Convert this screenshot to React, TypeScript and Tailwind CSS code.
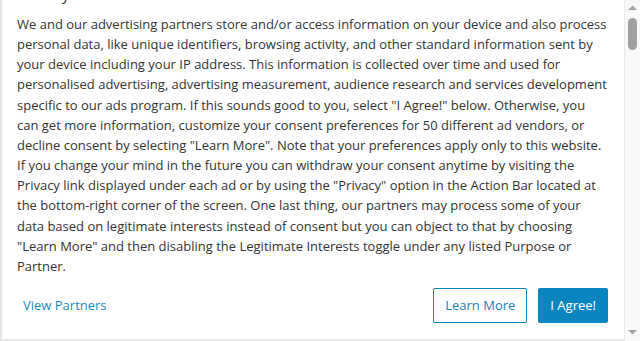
export default function App() {
  return (
    <div
      className="flex h-[341px] w-[640px] overflow-hidden bg-white text-[#333]"
      style={{ fontFamily: '"Open Sans", "Noto Sans", sans-serif' }}
    >
      {/* dialog body, scrolled a little past the heading */}
      <div className="flex-1 overflow-hidden border-b-2 border-l-2 border-r border-[#e6e6e6] border-r-[#e9e9e9]">
        <div className="-mt-[18px] px-[15px]">
          <h2 className="mb-2 text-[16px] leading-[24px] font-normal">Privacy</h2>
          <p className="text-[13px] leading-[20.15px]">
            We and our advertising partners store and/or access information on your device and also process
            personal data, like unique identifiers, browsing activity, and other standard information sent by
            your device including your IP address. This information is collected over time and used for
            personalised advertising, advertising measurement, audience research and services development
            specific to our ads program. If this sounds good to you, select "I Agree!" below. Otherwise, you
            can get more information, customize your consent preferences for 50 different ad vendors, or
            decline consent by selecting "Learn More". Note that your preferences apply only to this website.
            If you change your mind in the future you can withdraw your consent anytime by visiting the
            Privacy link displayed under each ad or by using the "Privacy" option in the Action Bar located at
            the bottom-right corner of the screen. One last thing, our partners may process some of your
            data based on legitimate interests instead of consent but you can object to that by choosing
            "Learn More" and then disabling the Legitimate Interests toggle under any listed Purpose or
            Partner.
          </p>
          <div className="mt-3 flex items-center">
            <a className="px-1.5 text-[13px] text-[#1a8ab8]" href="#">
              View Partners
            </a>
            <div className="ml-auto flex gap-[11px] pr-[1px]">
              <button className="h-[35px] rounded-[2px] border border-[#0b83bd] bg-white px-[11px] text-[13px] text-[#1a7fae]">
                Learn More
              </button>
              <button className="h-[35px] rounded-[2px] bg-[#0a85bf] px-[12px] text-[13px] text-white">
                I Agree!
              </button>
            </div>
          </div>
        </div>
      </div>

      {/* scrollbar */}
      <div className="flex w-[15px] flex-col items-center bg-[#f8f8f8]">
        <svg width="9" height="6" viewBox="0 0 9 6" className="mt-[5px]">
          <path d="M0 5 L4.5 0.5 L9 5 Z" fill="#a3a3a3" />
        </svg>
        <div className="mt-[7px] h-[32px] w-[9px] rounded-full bg-[#a1a1a1]" />
        <div className="flex-1" />
        <svg width="9" height="6" viewBox="0 0 9 6" className="mb-[6px]">
          <path d="M0 1 L4.5 5.5 L9 1 Z" fill="#a3a3a3" />
        </svg>
      </div>
    </div>
  );
}
